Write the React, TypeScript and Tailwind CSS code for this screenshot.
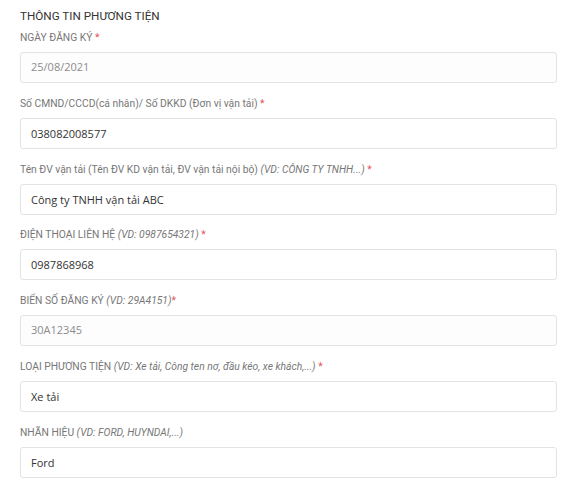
import React from "react";

type Field = {
  label: string;
  hint?: string;
  required?: boolean;
  tight?: boolean;
  value: string;
  disabled?: boolean;
};

const fields: Field[] = [
  { label: "NGÀY ĐĂNG KÝ", required: true, value: "25/08/2021", disabled: true },
  {
    label: "Số CMND/CCCD(cá nhân)/ Số DKKD (Đơn vị vận tải)",
    required: true,
    value: "038082008577",
  },
  {
    label: "Tên ĐV vận tải (Tên ĐV KD vận tải, ĐV vận tải nội bộ)",
    hint: "(VD: CÔNG TY TNHH...)",
    required: true,
    value: "Công ty TNHH vận tải ABC",
  },
  {
    label: "ĐIỆN THOẠI LIÊN HỆ",
    hint: "(VD: 0987654321)",
    required: true,
    value: "0987868968",
  },
  {
    label: "BIỂN SỐ ĐĂNG KÝ",
    hint: "(VD: 29A4151)",
    required: true,
    tight: true,
    value: "30A12345",
    disabled: true,
  },
  {
    label: "LOẠI PHƯƠNG TIỆN",
    hint: "(VD: Xe tải, Công ten nơ, đầu kéo, xe khách,...)",
    required: true,
    value: "Xe tải",
  },
  {
    label: "NHÃN HIỆU",
    hint: "(VD: FORD, HUYNDAI,...)",
    value: "Ford",
  },
];

const App: React.FC = () => {
  return (
    <div className="w-[575px] h-[489px] overflow-hidden bg-white font-['Roboto',sans-serif]">
      <div className="pl-5 pr-[18px] pt-[6px]">
        <h3 className="text-[11.7px] leading-[20px] text-[#333] mb-[4px]">
          THÔNG TIN PHƯƠNG TIỆN
        </h3>
        {fields.map((f, i) => (
          <div key={i} className={i === 0 ? "" : "mt-[12.8px]"}>
            <label className="block text-[10.3px] leading-[16px] text-[#777] mb-[6px]">
              {f.label}
              {f.hint && <i className="text-[#777]"> {f.hint}</i>}
              {f.required && (
                <span className="text-[#e55353]">{f.tight ? "*" : " *"}</span>
              )}
            </label>
            {f.disabled ? (
              <div className="flex items-center h-[31px] px-[10px] rounded-[3px] border border-[#e3e3e3] bg-[#fdfdfd] text-[#8c8c8c] font-['Open_Sans',sans-serif] text-[11px]">
                {f.value}
              </div>
            ) : (
              <input
                readOnly
                value={f.value}
                className="block w-full h-[31px] px-[10px] rounded-[3px] border border-[#e3e3e3] outline-none bg-white text-[#333] font-['Open_Sans',sans-serif] text-[11px]"
              />
            )}
          </div>
        ))}
      </div>
    </div>
  );
};

export default App;
